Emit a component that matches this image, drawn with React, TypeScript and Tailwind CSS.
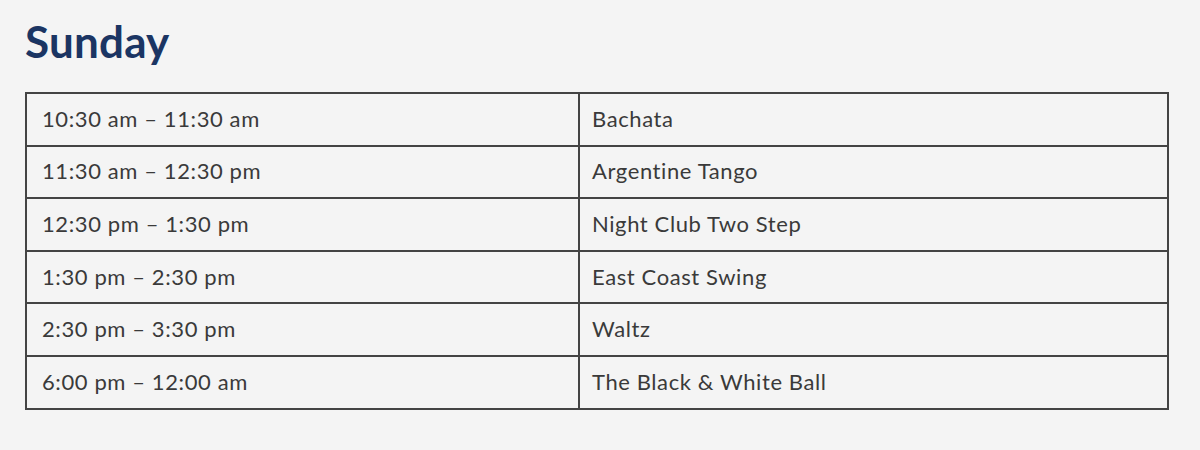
import React from 'react';

const rows: [string, string][] = [
  ['10:30 am – 11:30 am', 'Bachata'],
  ['11:30 am – 12:30 pm', 'Argentine Tango'],
  ['12:30 pm – 1:30 pm', 'Night Club Two Step'],
  ['1:30 pm – 2:30 pm', 'East Coast Swing'],
  ['2:30 pm – 3:30 pm', 'Waltz'],
  ['6:00 pm – 12:00 am', 'The Black & White Ball'],
];

const App: React.FC = () => {
  return (
    <div className="min-h-screen w-full bg-[#f4f4f4] px-[25px] pt-[15px]" style={{ fontFamily: 'Lato, "Open Sans", sans-serif' }}>
      {/* Title */}
      <h1 className="text-[44px] font-bold leading-[52px] text-[#1b3563] tracking-[0.2px]">Sunday</h1>

      {/* Schedule */}
      <table className="mt-[25px] w-[1144px] border-collapse text-[22px] tracking-[0.6px] text-[#3a3a3a]">
        <tbody>
          {rows.map(([time, dance]) => (
            <tr key={time} className="h-[52.6px]">
              <td className="w-[553px] border-2 border-[#444] pb-[2px] pl-[15px] align-middle">{time}</td>
              <td className="border-2 border-[#444] pb-[2px] pl-[12px] align-middle">{dance}</td>
            </tr>
          ))}
        </tbody>
      </table>
    </div>
  );
};

export default App;
